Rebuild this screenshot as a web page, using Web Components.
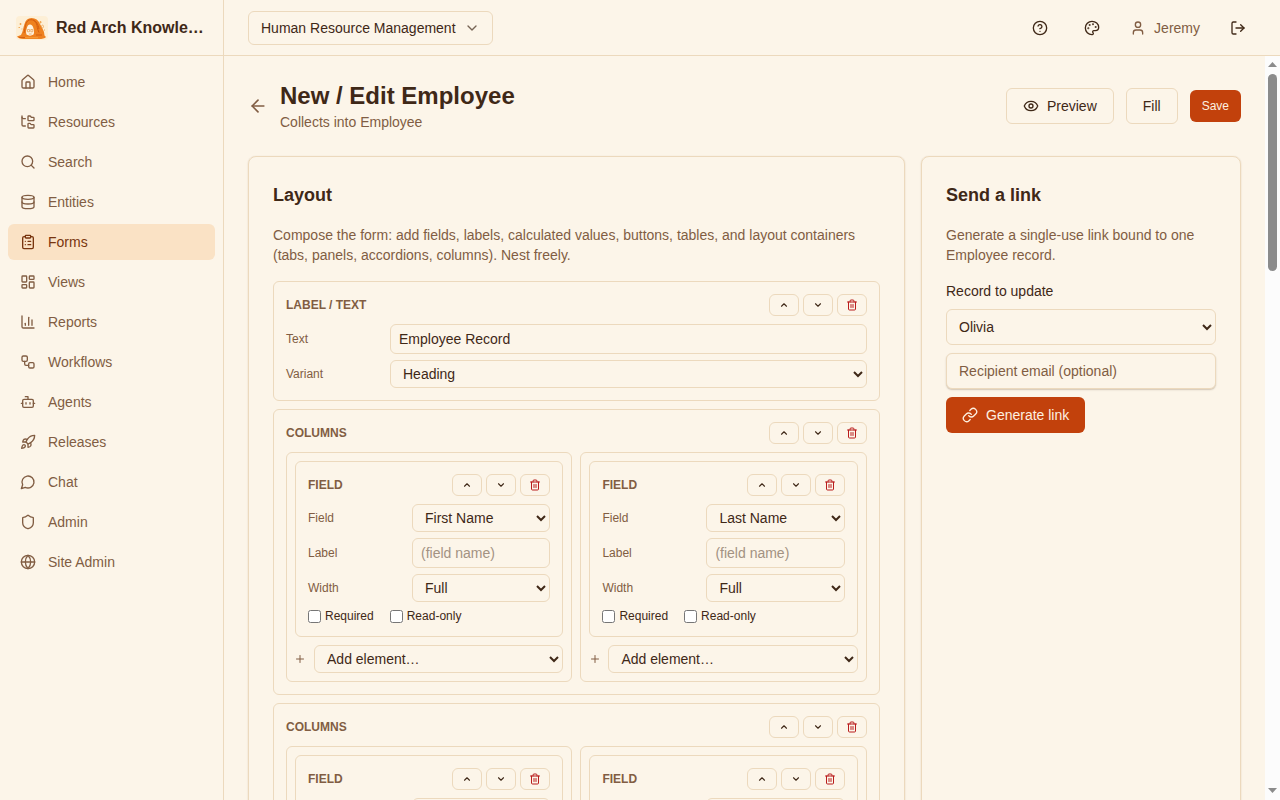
<!DOCTYPE html>
<html lang="en">
<head>
<meta charset="utf-8">
<title>New / Edit Employee</title>
<style>
:root{--bg:#fcf5e9;--fg:#3f2817;--muted:#815d43;--line:#ecd9bd;--accent:#fae2c5;--accent-fg:#78350f;--primary:#c2410c;--danger:#b91c1c}
html,body{margin:0;height:100%}
body{background:var(--bg);color:var(--fg);font:14px/20px "Liberation Sans",Arial,sans-serif;overflow:hidden}
</style>
</head>
<body>
<app-shell></app-shell>
<script>
const ICONS={
home:'<path d="M15 21v-8a1 1 0 0 0-1-1h-4a1 1 0 0 0-1 1v8"/><path d="M3 10a2 2 0 0 1 .709-1.528l7-6a2 2 0 0 1 2.582 0l7 6A2 2 0 0 1 21 10v9a2 2 0 0 1-2 2H5a2 2 0 0 1-2-2z"/>',
tree:'<path d="M20 10a1 1 0 0 0 1-1V6a1 1 0 0 0-1-1h-2.5a1 1 0 0 1-.8-.4l-.9-1.2A1 1 0 0 0 15 3h-2a1 1 0 0 0-1 1v5a1 1 0 0 0 1 1Z"/><path d="M20 21a1 1 0 0 0 1-1v-3a1 1 0 0 0-1-1h-2.9a1 1 0 0 1-.88-.55l-.42-.85a1 1 0 0 0-.92-.6H13a1 1 0 0 0-1 1v5a1 1 0 0 0 1 1Z"/><path d="M3 5a2 2 0 0 0 2 2h3"/><path d="M3 3v13a2 2 0 0 0 2 2h3"/>',
search:'<path d="m21 21-4.34-4.34"/><circle cx="11" cy="11" r="8"/>',
database:'<ellipse cx="12" cy="5" rx="9" ry="3"/><path d="M3 5V19A9 3 0 0 0 21 19V5"/><path d="M3 12A9 3 0 0 0 21 12"/>',
clipboard:'<rect width="8" height="4" x="8" y="2" rx="1" ry="1"/><path d="M16 4h2a2 2 0 0 1 2 2v14a2 2 0 0 1-2 2H6a2 2 0 0 1-2-2V6a2 2 0 0 1 2-2h2"/><path d="M12 11h4"/><path d="M12 16h4"/><path d="M8 11h.01"/><path d="M8 16h.01"/>',
dashboard:'<rect width="7" height="9" x="3" y="3" rx="1"/><rect width="7" height="5" x="14" y="3" rx="1"/><rect width="7" height="9" x="14" y="12" rx="1"/><rect width="7" height="5" x="3" y="16" rx="1"/>',
chart:'<path d="M3 3v16a2 2 0 0 0 2 2h16"/><path d="M18 17V9"/><path d="M13 17V5"/><path d="M8 17v-3"/>',
workflow:'<rect width="8" height="8" x="3" y="3" rx="2"/><path d="M7 11v4a2 2 0 0 0 2 2h4"/><rect width="8" height="8" x="13" y="13" rx="2"/>',
bot:'<path d="M12 8V4H8"/><rect width="16" height="12" x="4" y="8" rx="2"/><path d="M2 14h2"/><path d="M20 14h2"/><path d="M15 13v2"/><path d="M9 13v2"/>',
rocket:'<path d="M4.5 16.5c-1.5 1.26-2 5-2 5s3.74-.5 5-2c.71-.84.7-2.13-.09-2.91a2.18 2.18 0 0 0-2.91-.09z"/><path d="m12 15-3-3a22 22 0 0 1 2-3.95A12.88 12.88 0 0 1 22 2c0 2.72-.78 7.5-6 11a22.35 22.35 0 0 1-4 2z"/><path d="M9 12H4s.55-3.03 2-4c1.62-1.08 5 0 5 0"/><path d="M12 15v5s3.03-.55 4-2c1.08-1.62 0-5 0-5"/>',
chat:'<path d="M7.9 20A9 9 0 1 0 4 16.1L2 22Z"/>',
shield:'<path d="M20 13c0 5-3.5 7.5-7.66 8.95a1 1 0 0 1-.67-.01C7.5 20.5 4 18 4 13V6a1 1 0 0 1 1-1c2 0 4.5-1.2 6.24-2.72a1.17 1.17 0 0 1 1.52 0C14.51 3.81 17 5 19 5a1 1 0 0 1 1 1z"/>',
globe:'<circle cx="12" cy="12" r="10"/><path d="M12 2a14.5 14.5 0 0 0 0 20 14.5 14.5 0 0 0 0-20"/><path d="M2 12h20"/>',
help:'<circle cx="12" cy="12" r="10"/><path d="M9.09 9a3 3 0 0 1 5.83 1c0 2-3 3-3 3"/><path d="M12 17h.01"/>',
palette:'<path d="M12 22a1 1 0 0 1 0-20 10 9 0 0 1 10 9 5 5 0 0 1-5 5h-2.25a1.75 1.75 0 0 0-1.4 2.8l.3.4a1.75 1.75 0 0 1-1.4 2.8z"/><circle cx="13.5" cy="6.5" r=".5" fill="currentColor"/><circle cx="17.5" cy="10.5" r=".5" fill="currentColor"/><circle cx="6.5" cy="12.5" r=".5" fill="currentColor"/><circle cx="8.5" cy="7.5" r=".5" fill="currentColor"/>',
user:'<path d="M19 21v-2a4 4 0 0 0-4-4H9a4 4 0 0 0-4 4v2"/><circle cx="12" cy="7" r="4"/>',
logout:'<path d="m16 17 5-5-5-5"/><path d="M21 12H9"/><path d="M9 21H5a2 2 0 0 1-2-2V5a2 2 0 0 1 2-2h4"/>',
eye:'<path d="M2.062 12.348a1 1 0 0 1 0-.696 10.75 10.75 0 0 1 19.876 0 1 1 0 0 1 0 .696 10.75 10.75 0 0 1-19.876 0"/><circle cx="12" cy="12" r="3"/>',
back:'<path d="m12 19-7-7 7-7"/><path d="M19 12H5"/>',
down:'<path d="m6 9 6 6 6-6"/>',
up:'<path d="m18 15-6-6-6 6"/>',
trash:'<path d="M10 11v6"/><path d="M14 11v6"/><path d="M19 6v14a2 2 0 0 1-2 2H7a2 2 0 0 1-2-2V6"/><path d="M3 6h18"/><path d="M8 6V4a2 2 0 0 1 2-2h4a2 2 0 0 1 2 2v2"/>',
plus:'<path d="M5 12h14"/><path d="M12 5v14"/>',
link:'<path d="M10 13a5 5 0 0 0 7.54.54l3-3a5 5 0 0 0-7.07-7.07l-1.72 1.71"/><path d="M14 11a5 5 0 0 0-7.54-.54l-3 3a5 5 0 0 0 7.07 7.07l1.71-1.71"/>'
};
const define=(name,render)=>customElements.define(name,class extends HTMLElement{
  constructor(){super();this.attachShadow({mode:'open'})}
  connectedCallback(){this.shadowRoot.innerHTML='<style>*{box-sizing:border-box}:host{box-sizing:border-box;display:block}</style>'+render(this,n=>this.getAttribute(n)||'')}
});

define('ui-icon',(el,a)=>{const s=a('size')||16,w=a('stroke')||2;return `<style>:host{display:block;flex:none;width:${s}px;height:${s}px}svg{display:block}</style>
<svg width="${s}" height="${s}" viewBox="0 0 24 24" fill="none" stroke="currentColor" stroke-width="${w}" stroke-linecap="round" stroke-linejoin="round">${ICONS[a('name')]}</svg>`});

define('brand-logo',()=>`<style>:host{width:32px;height:24px;flex:none;border-radius:4px;overflow:hidden}svg{display:block}</style>
<svg width="32" height="24" viewBox="0 0 32 24"><rect width="32" height="24" fill="#fdefd6"/>
<path d="M1 20.500 5 19C7 16 7 12 8.500 8 9.500 4 12 2 15.500 2c4 0 7 2 8.500 6 1.500 3 3 5 4 8l.5 3.500L30 21c-1 1.500-4 2-7 2H7c-3 0-5-1-6-2.500z" fill="#ee811f"/>
<path d="M8 17C9.500 12 9 6 13 4M12 4.500c4-2 8 0 9 5 .5 3 1 5 2 7M17 4c3 1 5 4 6 9M20 19h6M3 21.500h6" fill="none" stroke="#d45f10" stroke-width="1"/>
<path d="M10.500 18.500c-1-3 0-5 .5-7 .5-2 1.500-3 3-3s3 1.500 3.500 4c.5 2 1 4 0 6-2 1.500-5 1.500-7 0z" fill="#fff3df"/>
<path d="M11.500 13.500h2v2.300h-2zM14.800 13.500h2v2.300h-2zM12.800 18h2.800" fill="none" stroke="#e5a25c" stroke-width=".8"/>
<path d="M9 21.700h13" stroke="#f7a13c" stroke-width=".9"/>
<path d="M4.500 7v2M3.500 8h2M24.500 5v2.400M23.300 6.200h2.400M2.500 11.500h1.500M5.500 13h1M28 14h1" stroke="#f0a54e" stroke-width=".9"/>
<ellipse cx="26.500" cy="10.500" rx="1" ry="1.400" fill="none" stroke="#e9a050" stroke-width=".7"/></svg>`);

define('nav-item',(el,a)=>`<style>:host{display:flex;align-items:center;gap:12px;height:36px;padding:0 12px;border-radius:6px;color:var(--muted)}
:host([active]){background:var(--accent);color:var(--accent-fg)}</style><ui-icon name="${a('icon')}"></ui-icon><slot></slot>`);

define('side-bar',()=>`<style>:host{width:224px;border-right:1px solid var(--line)}
.brand{display:flex;align-items:center;gap:8px;height:56px;padding:0 16px;border-bottom:1px solid var(--line);font:700 16px/24px "Liberation Sans",Arial,sans-serif;white-space:nowrap}
nav{display:flex;flex-direction:column;gap:4px;padding:8px}</style>
<div class="brand"><brand-logo></brand-logo><span>Red Arch Knowle…</span></div><nav>`+
[['home','Home'],['tree','Resources'],['search','Search'],['database','Entities'],['clipboard','Forms'],['dashboard','Views'],['chart','Reports'],['workflow','Workflows'],['bot','Agents'],['rocket','Releases'],['chat','Chat'],['shield','Admin'],['globe','Site Admin']]
.map(([i,t])=>`<nav-item icon="${i}"${t==='Forms'?' active':''}>${t}</nav-item>`).join('')+'</nav>');

define('top-bar',()=>`<style>:host{display:flex;align-items:center;justify-content:space-between;height:56px;padding:0 24px;border-bottom:1px solid var(--line)}
.app{display:flex;align-items:center;justify-content:space-between;width:245px;height:34px;padding:0 12px;border:1px solid var(--line);border-radius:6px}
.app ui-icon{opacity:.7}
.right{display:flex;align-items:center}.ib{display:grid;place-items:center;width:36px;height:36px}
.user{display:flex;align-items:center;gap:8px;color:var(--muted);margin:0 20px}</style>
<div class="app"><span>Human Resource Management</span><ui-icon name="down"></ui-icon></div>
<div class="right"><span class="ib"><ui-icon name="help"></ui-icon></span><span class="ib" style="margin-left:16px"><ui-icon name="palette"></ui-icon></span>
<span class="user"><ui-icon name="user"></ui-icon>Jeremy</span><span class="ib"><ui-icon name="logout"></ui-icon></span></div>`);

define('ui-button',(el,a)=>`<style>:host{display:inline-flex;align-items:center;gap:8px;height:36px;padding:0 16px;border:1px solid var(--line);border-radius:6px;white-space:nowrap}
:host([primary]){background:var(--primary);border:0;color:#fdf0e0}:host([small]){height:32px;padding:0 12px;font-size:12px}</style>
${a('icon')?`<ui-icon name="${a('icon')}"></ui-icon>`:''}<slot></slot>`);

define('ui-card',(el,a)=>`<style>:host{border:1px solid var(--line);border-radius:8px;padding:24px;box-shadow:0 1px 2px rgba(120,70,20,.13),0 0 1px rgba(120,70,20,.18)}
h2{margin:0 0 16px;font:700 18px/28px "Liberation Sans",Arial,sans-serif}p{margin:0 0 16px;color:var(--muted)}</style>
<h2>${a('heading')}</h2><p>${a('text')}</p><slot></slot>`);

define('ui-select',(el,a)=>`<style>select{display:block;width:100%;height:${a('h')||28}px;padding:0 8px;border:1px solid var(--line);border-radius:6px;background:var(--bg);color:var(--fg);font:14px/20px "Liberation Sans",Arial,sans-serif}</style>
<select><option>${a('value')}</option></select>`);

define('ui-input',(el,a)=>`<style>input{display:block;width:100%;height:30px;padding:4px 8px;border:1px solid var(--line);border-radius:6px;background:var(--bg);color:var(--fg);font:14px/20px "Liberation Sans",Arial,sans-serif;outline:0}
input::placeholder{color:#a39282;opacity:1}:host([large]) input{height:36px;padding:4px 12px;box-shadow:0 1px 2px rgba(90,60,30,.16),0 1px 1px rgba(90,60,30,.1)}:host([large]) input::placeholder{color:var(--muted)}</style>
<input value="${a('value')}" placeholder="${a('placeholder')}">`);

define('form-row',(el,a)=>`<style>:host{display:grid;grid-template-columns:96px minmax(0,1fr);gap:8px;align-items:center}span{font-size:12px;line-height:16px;color:var(--muted)}</style><span>${a('label')}</span><slot></slot>`);

define('ui-check',()=>`<style>:host{display:flex;align-items:center;gap:4px;font-size:12px;line-height:16px}input{width:13px;height:13px;margin:0}</style><input type="checkbox"><slot></slot>`);

define('form-block',(el,a)=>`<style>:host{border:1px solid var(--line);border-radius:6px;padding:12px}
header{display:flex;align-items:center;gap:4px;margin-bottom:8px}b{flex:1;font-size:12px;line-height:16px;color:var(--muted)}
i{display:grid;place-items:center;width:30px;height:22px;border:1px solid var(--line);border-radius:6px}i:last-child{color:var(--danger)}
.body{display:flex;flex-direction:column;gap:6px}</style>
<header><b>${a('kind')}</b><i><ui-icon name="up" size="10" stroke="2.6"></ui-icon></i><i><ui-icon name="down" size="10" stroke="2.6"></ui-icon></i><i><ui-icon name="trash" size="12"></ui-icon></i></header><div class="body"><slot></slot></div>`);

define('field-column',(el,a)=>`<style>:host{border:1px solid var(--line);border-radius:6px;padding:8px;min-width:0}
form-block{min-height:176px}.checks{display:flex;gap:16px}.add{display:flex;align-items:center;gap:8px;margin-top:8px;color:var(--muted)}.add ui-icon{margin:0 -.4px 0 -.6px}.add ui-select{flex:1}</style>
`+(a('field')?`<form-block kind="FIELD"><form-row label="Field"><ui-select value="${a('field')}"></ui-select></form-row>
<form-row label="Label"><ui-input placeholder="(field name)"></ui-input></form-row>
<form-row label="Width"><ui-select value="Full"></ui-select></form-row>
<div class="checks"><ui-check>Required</ui-check><ui-check>Read-only</ui-check></div></form-block>
<div class="add"><ui-icon name="plus" size="12"></ui-icon><ui-select value="Add element…"></ui-select></div>`
:`<form-block kind="FIELD"><form-row><ui-select></ui-select></form-row></form-block>`));

define('columns-block',(el,a)=>`<style>.g{display:grid;grid-template-columns:286.4px minmax(0,1fr);gap:8px}</style>
<form-block kind="COLUMNS"><div class="g">${a('fields').split('|').map(f=>`<field-column field="${f}"></field-column>`).join('')}</div></form-block>`);

define('form-editor',()=>`<style>:host{padding:24px;min-height:2700px;display:flex;flex-direction:column;gap:24px}
.head{display:flex;align-items:center;gap:12px;height:52px}.t{flex:1}.head>ui-icon{color:var(--muted)}
h1{margin:0;font:700 24px/32px "Liberation Sans",Arial,sans-serif}.t p{margin:0;color:var(--muted)}
.cols{flex:1;display:grid;grid-template-columns:minmax(0,1fr) 320px;gap:16px}
.stack{display:flex;flex-direction:column;gap:8px}.side{display:flex;flex-direction:column;align-items:flex-start;gap:8px}.side>ui-select,.side>ui-input{width:100%}</style>
<div class="head"><ui-icon name="back" size="20"></ui-icon><div class="t"><h1>New / Edit Employee</h1><p>Collects into Employee</p></div>
<ui-button icon="eye">Preview</ui-button><ui-button>Fill</ui-button><ui-button primary small>Save</ui-button></div>
<div class="cols"><ui-card heading="Layout" text="Compose the form: add fields, labels, calculated values, buttons, tables, and layout containers (tabs, panels, accordions, columns). Nest freely."><div class="stack">
<form-block kind="LABEL / TEXT"><form-row label="Text"><ui-input value="Employee Record"></ui-input></form-row><form-row label="Variant"><ui-select value="Heading"></ui-select></form-row></form-block>
<columns-block fields="First Name|Last Name"></columns-block><columns-block fields="|"></columns-block></div></ui-card>
<ui-card heading="Send a link" text="Generate a single-use link bound to one Employee record."><div class="side"><span>Record to update</span><ui-select h="36" value="Olivia"></ui-select><ui-input large placeholder="Recipient email (optional)"></ui-input><ui-button primary icon="link">Generate link</ui-button></div></ui-card></div>`);

define('scroll-rail',()=>`<style>:host{display:flex;flex-direction:column;align-items:center;flex:none;width:15px;padding:6px 0 7px;background:#fcfcfc}
.thumb{width:9px;height:197px;margin-top:7px;border-radius:5px;background:#8b8b8b}svg{display:block}.end{margin-top:auto}</style>
<svg width="9" height="5"><path d="M0 5 4.500 0 9 5z" fill="#8b8b8b"/></svg><div class="thumb"></div><svg class="end" width="9" height="5"><path d="M0 0h9L4.500 5z" fill="#8b8b8b"/></svg>`);

define('app-shell',()=>`<style>:host{display:grid;grid-template-columns:224px minmax(0,1fr);height:100vh}
.main{display:flex;flex-direction:column;height:100vh;min-width:0}top-bar{flex:none}.view{flex:1;min-height:0;display:flex}
.scroll{flex:1;min-width:0;overflow:hidden;background:var(--bg)}</style>
<side-bar></side-bar><div class="main"><top-bar></top-bar><div class="view"><div class="scroll"><form-editor></form-editor></div><scroll-rail></scroll-rail></div></div>`);
</script>
</body>
</html>
